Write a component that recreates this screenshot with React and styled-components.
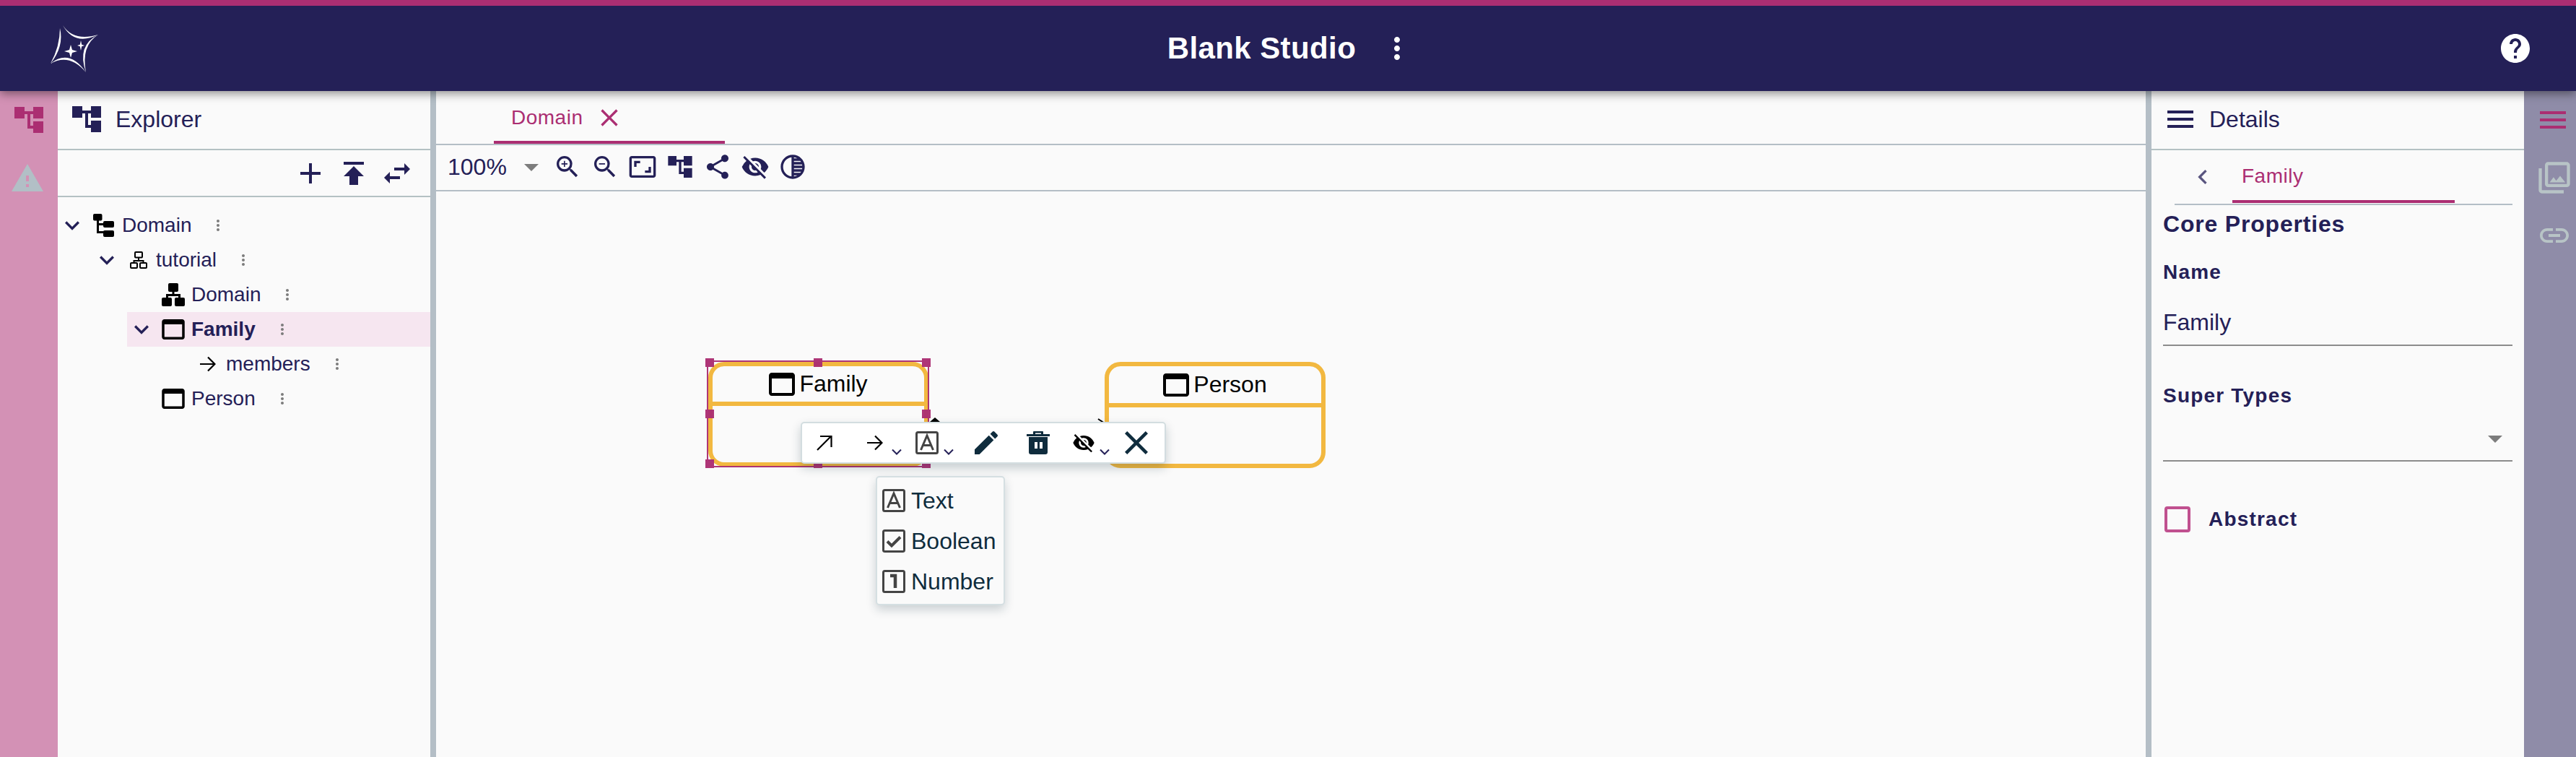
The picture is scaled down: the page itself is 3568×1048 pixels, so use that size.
import React from "react";
import styled, { createGlobalStyle } from "styled-components";
import {
  MdAccountTree, MdAdd, MdPublish, MdSwapHoriz, MdWarning, MdMoreVert, MdExpandMore, MdClose,
  MdArrowDropDown, MdZoomIn, MdZoomOut, MdAspectRatio, MdShare, MdVisibilityOff, MdTonality,
  MdMenu, MdChevronLeft, MdOutlinePhotoLibrary, MdLink, MdHelp,
} from "react-icons/md";

const NAVY = "#242057";
const MAGENTA = "#ab2e72";
const INK = "#0f2c3d";

const Global = createGlobalStyle`
  html, body { margin: 0; padding: 0; height: 100%; overflow: hidden; background: #fafafa; }
  #root { height: 100%; }
  * { box-sizing: border-box; }
  svg { display: block; flex: none; }
`;

const Page = styled.div`
  height: 1048px; display: flex; flex-direction: column;
  font-family: "Liberation Sans", Arial, sans-serif; color: ${NAVY}; background: #fafafa;
`;
const Header = styled.header`
  height: 126px; flex: none; background: ${NAVY}; border-top: 8px solid ${MAGENTA};
  display: flex; align-items: center; padding: 0 60px 0 70px; color: #fff;
  position: relative; z-index: 5; box-shadow: 0 4px 12px rgba(0,0,0,.42);
`;
const TitleGroup = styled.div`
  flex: 1; display: flex; align-items: center; justify-content: center; gap: 33px; padding-right: 20px;
`;
const Title = styled.div`font-size: 42px; font-weight: 700; letter-spacing: .4px; line-height: 48px;`;
const Body = styled.main`flex: 1; display: flex; min-height: 0;`;
const LeftRail = styled.nav`
  width: 80px; flex: none; background: #d391b5; padding: 16px 0 0 16px; display: flex; flex-direction: column; gap: 33px;
`;
const RightRail = styled.nav`
  width: 72px; flex: none; background: #8f8ca8; padding: 16px 0 0 16px; display: flex; flex-direction: column; gap: 30px;
`;
const RailSlot = styled.div`margin-left: ${(p) => p.$shift || 0}px; color: ${(p) => p.$color};`;
const SidePanel = styled.section`width: 516px; flex: none; display: flex; flex-direction: column; background: #fafafa;`;
const Splitter = styled.div`width: 8px; flex: none; background: #b4bec6;`;
const PanelHead = styled.div`
  height: 82px; flex: none; display: flex; align-items: center; gap: 16px; padding: 0 0 0 16px;
  border-bottom: 2px solid #b4c1c3; font-size: 32px; padding-bottom: 2px;
`;
const TreeTools = styled.div`
  height: 65px; flex: none; display: flex; align-items: center; justify-content: flex-end; gap: 12px;
  padding-right: 22px; border-bottom: 2px solid #b4c1c3;
`;
const Tree = styled.div`padding-top: 15px;`;
const Row = styled.div`
  height: 48px; display: flex; align-items: center; margin-left: ${(p) => p.$depth * 48}px;
  background: ${(p) => (p.$selected ? "#f6e6f0" : "transparent")};
  font-size: 28px; font-weight: ${(p) => (p.$selected ? 700 : 400)};
`;
const Slot = styled.div`width: ${(p) => p.$w}px; flex: none; display: flex; color: ${NAVY};`;
const RowIcon = styled.div`width: ${(p) => p.$w}px; flex: none; margin-right: ${(p) => p.$gap}px; display: flex; align-items: center; color: #000;`;
const Dots = styled.div`margin-left: 25px; color: #7c7c7c;`;

const Center = styled.section`flex: 1; min-width: 0; display: flex; flex-direction: column;`;
const TabBar = styled.div`height: 75px; flex: none; padding-left: 80px; border-bottom: 2px solid #b4bec6;`;
const Tab = styled.div`
  width: 320px; height: 73px; border-bottom: 4px solid ${MAGENTA}; padding: 4px 0 0 24px; color: ${MAGENTA};
  font-size: 28px; letter-spacing: .5px; display: flex; align-items: center; gap: 17px;
`;
const ViewTools = styled.div`
  height: 64px; flex: none; border-bottom: 2px solid #b4bec6; display: flex; align-items: center; padding-left: 16px; gap: 12px; padding-bottom: 2px;
`;
const ZoomSelect = styled.div`display: flex; align-items: center; font-size: 32px; margin-right: -6px; width: 140px; color: ${NAVY};`;
const ZoomCaret = styled.div`margin-left: 10px; color: #7c7c7c;`;

const Canvas = styled.div`flex: 1; position: relative; background: #fafafa; overflow: hidden;`;
const Node = styled.div`
  position: absolute; left: ${(p) => p.$x}px; top: 236px; width: ${(p) => p.$w}px; height: ${(p) => p.$h}px;
  border: 6px solid #f2b840; border-radius: 22px; color: #000;
`;
const NodeHead = styled.div`
  height: ${(p) => p.$h}px; border-bottom: 6px solid #f2b840; display: flex; align-items: center; justify-content: center; gap: 6px;
  font-size: 32px;
`;
const Selection = styled.div`
  position: absolute; left: 375px; top: 234px; width: 308px; height: 148px; border: 2px solid ${MAGENTA}; opacity: .96;
`;
const Handle = styled.div`
  position: absolute; width: 12px; height: 12px; background: ${MAGENTA};
  ${(p) => p.$pos}
`;
const Edge = styled.svg`position: absolute; left: 680px; top: 305px;`;
const ToolPopup = styled.div`
  position: absolute; left: 505px; top: 319px; width: 506px; height: 58px; background: #fff;
  border: 2px solid #d3dde0; border-radius: 5px; box-shadow: 0 6px 14px rgba(15,44,61,.22);
  display: flex; align-items: center; padding-left: 20px;
`;
const ToolItem = styled.div`margin-left: ${(p) => p.$gap || 0}px; color: ${(p) => p.$color || INK}; display: flex;`;
const ToolCaret = styled.div`margin-left: ${(p) => p.$gap}px; align-self: flex-start; margin-top: 35px; color: ${NAVY};`;
const Menu = styled.div`
  position: absolute; left: 609px; top: 394px; width: 179px; height: 179px; background: #fafafa;
  border: 2px solid #d5dfe2; border-radius: 5px; padding: 4px 0 3px 7px; box-shadow: 0 6px 14px rgba(15,44,61,.2);
`;
const MenuRow = styled.div`height: 56px; display: flex; align-items: center; gap: 8px; font-size: 32px; color: ${INK};`;

const DetailTabs = styled.div`
  height: 76px; flex: none; margin: 0 16px 0 32px; border-bottom: 2px solid #b4bec6; display: flex; align-items: flex-end; padding-left: 19px;
`;
const BackSlot = styled.div`width: 61px; align-self: center; color: #5a5680; margin-left: 0;`;
const DetailTab = styled.div`
  width: 308px; height: 70px; border-bottom: 4px solid ${MAGENTA}; padding-left: 13px; margin-bottom: 1px;
  color: ${MAGENTA}; font-size: 28px; letter-spacing: .5px; display: flex; align-items: center;
`;
const Form = styled.div`padding: 0 16px; display: flex; flex-direction: column;`;
const Section = styled.h2`margin: 6px 0 0; font-size: 32px; line-height: 40px; font-weight: 700; letter-spacing: .8px;`;
const FieldLabel = styled.label`display: block; margin-top: ${(p) => p.$top}px; font-size: 28px; line-height: 40px; font-weight: 700; letter-spacing: 1.2px;`;
const TextValue = styled.div`
  height: 82px; padding: 29px 0 11px; font-size: 32px; line-height: 40px; border-bottom: 2px solid #8c8c8c;
`;
const SelectValue = styled.div`
  height: 71px; padding-top: 15px; display: flex; justify-content: flex-end; border-bottom: 2px solid #8c8c8c; color: #7c7c7c;
`;
const CheckRow = styled.div`margin: 62px 0 0 2px; display: flex; align-items: center; gap: 25px;`;
const Box = styled.div`width: 36px; height: 36px; border: 4px solid #c0508f; border-radius: 4px;`;
const CheckLabel = styled.span`font-size: 28px; font-weight: 700; letter-spacing: 1.2px;`;
const LogoMark = styled.svg`color: #fff;`;

const Logo = () => (
  <LogoMark width="66" height="67" viewBox="0 0 66 67" fill="currentColor">
    <path d="M17 1 Q32 24 66 14 Q33 30 17 1Z" />
    <path d="M66 14 Q42 29 49 66 Q36 29 66 14Z" />
    <path d="M49 66 Q26 39 0 54 Q26 33 49 66Z" />
    <path d="M0 54 Q13 30 13 5 Q19 30 0 54Z" />
    <path d="M28 28 L30 35 L37 37 L30 39 L28 46 L26 39 L19 37 L26 35Z" />
    <path d="M42 22 L43.2 27.8 L47 29 L43.2 30.2 L42 36 L40.8 30.2 L37 29 L40.8 27.8Z" />
  </LogoMark>
);

const FileTreeIcon = () => (
  <svg width="29" height="32" viewBox="0 0 29 32" fill="currentColor">
    <rect x="0" y="0" width="12.5" height="9.5" rx="2" />
    <rect x="14" y="10" width="15" height="9" rx="2" />
    <rect x="14" y="23" width="15" height="9" rx="2" />
    <rect x="5" y="9" width="3" height="18" />
    <rect x="5" y="13" width="10" height="3" />
    <rect x="5" y="24" width="10" height="3" />
  </svg>
);
const PackageOutline = () => (
  <svg width="24" height="24" viewBox="0 0 24 24" fill="none" stroke="currentColor" strokeWidth="2">
    <rect x="7" y="1" width="10" height="7.5" rx="1" />
    <rect x="1" y="16" width="9" height="7" rx="1" />
    <rect x="14" y="16" width="9" height="7" rx="1" />
    <path d="M12 8.5V13M5.5 16V13H18.5V16" />
  </svg>
);
const PackageSolid = () => (
  <svg width="32" height="32" viewBox="0 0 32 32" fill="currentColor">
    <rect x="9" y="0" width="14" height="12" rx="2" />
    <rect x="0" y="20" width="14" height="12" rx="2" />
    <rect x="18" y="20" width="14" height="12" rx="2" />
    <path d="M14.5 12h3v3H26v6h-3v-3H9v3H6v-6h8.500z" />
  </svg>
);
const ClassIcon = ({ w = 32, h = 28 }) => (
  <svg width={w} height={h} viewBox="3 4 18 16" fill="currentColor">
    <path d="M19 4H5c-1.110 0-2 .9-2 2v12c0 1.100.89 2 2 2h14c1.100 0 2-.9 2-2V6c0-1.100-.89-2-2-2zm0 14H5V8h14v10z" />
  </svg>
);
const ArrowRight = ({ size = 22 }) => (
  <svg width={size} height={size} viewBox="0 0 22 22" fill="none" stroke="#000" strokeWidth="2.200">
    <path d="M0 11H20M11 1.500 20.500 11 11 20.500" />
  </svg>
);
const ArrowNE = () => (
  <svg width="22" height="22" viewBox="0 0 22 22" fill="none" stroke="#000" strokeWidth="2.200">
    <path d="M1 21 20 2M5 2H20.500V17" />
  </svg>
);
const BoxIcon = ({ children }) => (
  <svg width="32" height="32" viewBox="0 0 32 32" fill="none" stroke="#444" strokeWidth="3">
    <rect x="1.500" y="1.500" width="29" height="29" rx="2" />
    {children}
  </svg>
);
const TextIcon = () => <BoxIcon><path d="M7.500 26 16 6l8.500 20M10.500 19.500h11" /></BoxIcon>;
const CheckIcon = () => <BoxIcon><path d="M7 16.500 13 22.500 25 10.500" strokeWidth="4" /></BoxIcon>;
const NumberIcon = () => <BoxIcon><path d="M11 8h7v17" strokeWidth="4.500" /></BoxIcon>;
const PencilIcon = () => (
  <svg width="32" height="32" viewBox="3 3 18 18" fill="currentColor">
    <path d="M3 17.250V21h3.750L17.810 9.940l-3.750-3.750L3 17.250zM20.710 7.040c.39-.39.39-1.020 0-1.410l-2.340-2.340c-.39-.39-1.020-.39-1.410 0l-1.830 1.830 3.750 3.750 1.830-1.830z" />
  </svg>
);
const TrashIcon = () => (
  <svg width="32" height="32" viewBox="0 0 32 32" fill="currentColor">
    <path fillRule="evenodd" d="M10 0h12a1 1 0 0 1 1 1v3h9v3H0V4h9V1a1 1 0 0 1 1-1zM12 2.500V4h8V2.500zM3 8h26v21a3 3 0 0 1-3 3H6a3 3 0 0 1-3-3zM11 15v9h4v-9zM18 15v9h4v-9z" />
  </svg>
);
const CrossIcon = () => (
  <svg width="32" height="32" viewBox="5 5 14 14" fill="currentColor">
    <path d="M19 6.410 17.590 5 12 10.590 6.410 5 5 6.410 10.590 12 5 17.590 6.410 19 12 13.410 17.590 19 19 17.590 13.410 12z" />
  </svg>
);
const MiniChevron = () => (
  <svg width="14" height="9" viewBox="0 0 14 9" fill="none" stroke="currentColor" strokeWidth="2"><path d="M1 1.500 7 7.500 13 1.500" /></svg>
);

const TreeRow = ({ depth, slot, chevron, icon, iconW, gap, selected, children }) => (
  <Row $depth={depth} $selected={selected}>
    <Slot $w={slot}>{chevron && <MdExpandMore size={40} />}</Slot>
    <RowIcon $w={iconW} $gap={gap}>{icon}</RowIcon>
    <span>{children}</span>
    <Dots><MdMoreVert size={24} /></Dots>
  </Row>
);

const handles = [
  "left:-4px;top:-5px;", "left:calc(50% - 6px);top:-5px;", "right:-4px;top:-5px;",
  "left:-4px;top:calc(50% - 6px);", "right:-4px;top:calc(50% - 6px);",
  "left:-4px;bottom:-3px;", "left:calc(50% - 6px);bottom:-3px;", "right:-4px;bottom:-3px;",
];

export default function App() {
  return (
    <Page>
      <Global />
      <Header>
        <Logo />
        <TitleGroup>
          <Title>Blank Studio</Title>
          <MdMoreVert size={48} />
        </TitleGroup>
        <MdHelp size={48} />
      </Header>
      <Body>
        <LeftRail>
          <RailSlot $color={MAGENTA}><MdAccountTree size={48} /></RailSlot>
          <RailSlot $color="#b2bfc6" $shift={-2}><MdWarning size={48} /></RailSlot>
        </LeftRail>
        <SidePanel>
          <PanelHead><MdAccountTree size={48} /><span>Explorer</span></PanelHead>
          <TreeTools>
            <MdAdd size={48} /><MdPublish size={48} /><MdSwapHoriz size={48} />
          </TreeTools>
          <Tree>
            <TreeRow depth={0} slot={49} chevron icon={<FileTreeIcon />} iconW={29} gap={11}>Domain</TreeRow>
            <TreeRow depth={1} slot={52} chevron icon={<PackageOutline />} iconW={24} gap={12}>tutorial</TreeRow>
            <TreeRow depth={2} slot={48} icon={<PackageSolid />} iconW={32} gap={9}>Domain</TreeRow>
            <TreeRow depth={2} slot={48} chevron selected icon={<ClassIcon />} iconW={32} gap={9}>Family</TreeRow>
            <TreeRow depth={2} slot={101} icon={<ArrowRight />} iconW={22} gap={14}>members</TreeRow>
            <TreeRow depth={2} slot={48} icon={<ClassIcon />} iconW={32} gap={9}>Person</TreeRow>
          </Tree>
        </SidePanel>
        <Splitter />
        <Center>
          <TabBar>
            <Tab><span>Domain</span><MdClose size={40} /></Tab>
          </TabBar>
          <ViewTools>
            <ZoomSelect>100%<ZoomCaret><MdArrowDropDown size={48} /></ZoomCaret></ZoomSelect>
            <MdZoomIn size={40} /><MdZoomOut size={40} /><MdAspectRatio size={40} /><MdAccountTree size={40} />
            <MdShare size={40} /><MdVisibilityOff size={40} /><MdTonality size={40} />
          </ViewTools>
          <Canvas>
            <Edge width="260" height="24" viewBox="0 0 260 24" fill="none">
              <path d="M4 14 L11 8 L18 14Z" fill="#000" />
              <path d="M237 10 L246 16" stroke="#000" strokeWidth="2" />
            </Edge>
            <Node $x={377} $w={305} $h={145}>
              <NodeHead $h={55}><ClassIcon w={36} h={32} /><span>Family</span></NodeHead>
            </Node>
            <Node $x={926} $w={306} $h={147}>
              <NodeHead $h={57}><ClassIcon w={36} h={32} /><span>Person</span></NodeHead>
            </Node>
            <Selection>{handles.map((h) => <Handle key={h} $pos={h} />)}</Selection>
            <ToolPopup>
              <ToolItem><ArrowNE /></ToolItem>
              <ToolItem $gap={48}><ArrowRight /></ToolItem>
              <ToolCaret $gap={12}><MiniChevron /></ToolCaret>
              <ToolItem $gap={19}><TextIcon /></ToolItem>
              <ToolCaret $gap={7}><MiniChevron /></ToolCaret>
              <ToolItem $gap={29}><PencilIcon /></ToolItem>
              <ToolItem $gap={40}><TrashIcon /></ToolItem>
              <ToolItem $gap={31} $color="#000"><MdVisibilityOff size={32} /></ToolItem>
              <ToolCaret $gap={6}><MiniChevron /></ToolCaret>
              <ToolItem $gap={21}><CrossIcon /></ToolItem>
            </ToolPopup>
            <Menu>
              <MenuRow><TextIcon />Text</MenuRow>
              <MenuRow><CheckIcon />Boolean</MenuRow>
              <MenuRow><NumberIcon />Number</MenuRow>
            </Menu>
          </Canvas>
        </Center>
        <Splitter />
        <SidePanel>
          <PanelHead><MdMenu size={48} /><span>Details</span></PanelHead>
          <DetailTabs>
            <BackSlot><MdChevronLeft size={40} /></BackSlot>
            <DetailTab>Family</DetailTab>
          </DetailTabs>
          <Form>
            <Section>Core Properties</Section>
            <FieldLabel $top={27}>Name</FieldLabel>
            <TextValue>Family</TextValue>
            <FieldLabel $top={49}>Super Types</FieldLabel>
            <SelectValue><MdArrowDropDown size={48} /></SelectValue>
            <CheckRow><Box /><CheckLabel>Abstract</CheckLabel></CheckRow>
          </Form>
        </SidePanel>
        <RightRail>
          <RailSlot $color={MAGENTA}><MdMenu size={48} /></RailSlot>
          <RailSlot $color="#b8c4c6"><MdOutlinePhotoLibrary size={52} /></RailSlot>
          <RailSlot $color="#b8c4c6" $shift={2}><MdLink size={48} /></RailSlot>
        </RightRail>
      </Body>
    </Page>
  );
}
